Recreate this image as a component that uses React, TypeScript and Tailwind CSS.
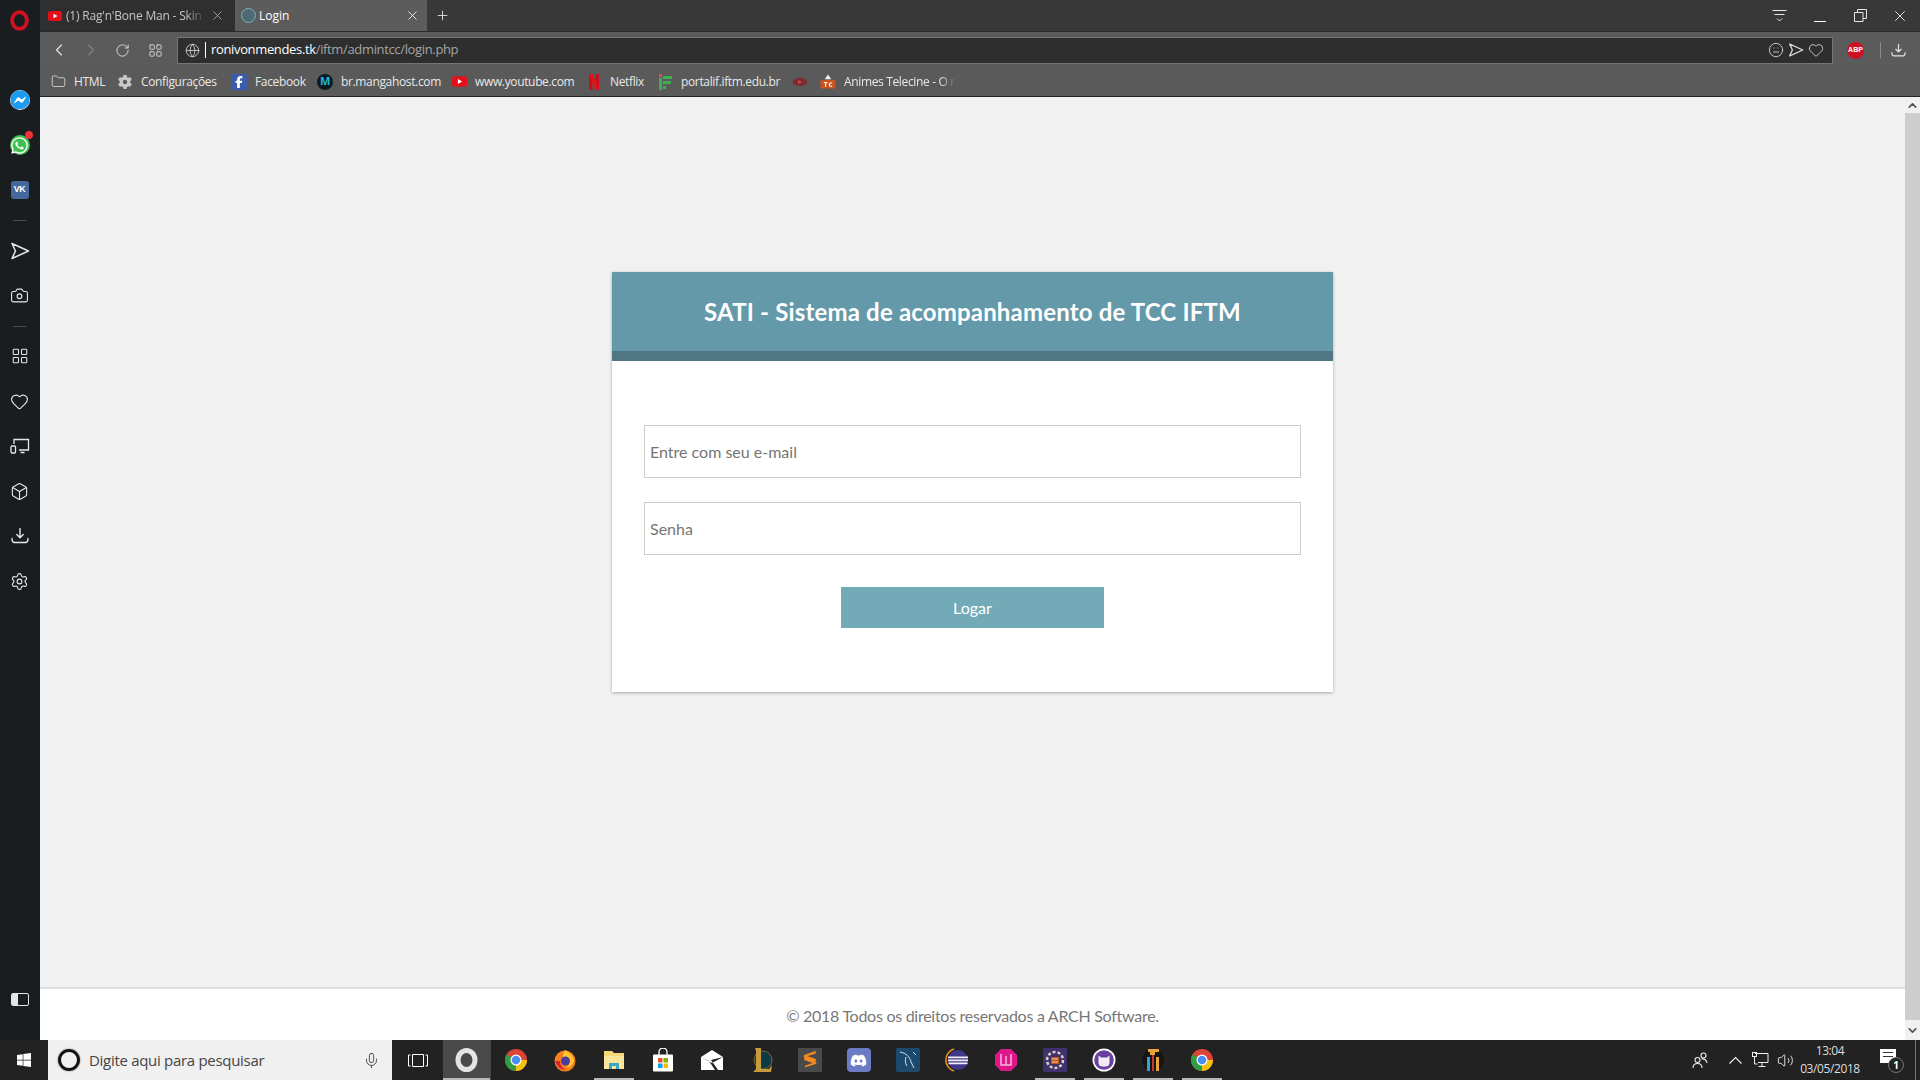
import React from "react";
import { Camera, LayoutGrid, Heart, Box, Settings, ChevronLeft, ChevronRight, RotateCw, Globe, Meh, X, Plus, Folder, ChevronUp, ChevronDown, Mic, Volume2 } from "lucide-react";
import { FaFacebookMessenger, FaWhatsapp, FaDiscord, FaFacebookF, FaWindows, FaGear } from "react-icons/fa6";

const Send = ({ s = 20, c = "#e6e6e6" }: { s?: number; c?: string }) => (
  <svg width={s} height={s} viewBox="0 0 20 20" fill="none" stroke={c} strokeWidth="1.5" strokeLinejoin="round"><path d="M2 2.500 18.500 10 2 17.500 5.500 10Z" /></svg>
);
const Tray = ({ s = 18, c = "#e6e6e6" }: { s?: number; c?: string }) => (
  <svg width={s} height={s} viewBox="0 0 18 18" fill="none" stroke={c} strokeWidth="1.4" strokeLinecap="round" strokeLinejoin="round"><path d="M9 1.500v9M5.800 7.500 9 10.700l3.200-3.200M1 11.500c0 2.500 1 4 2.500 4h11c1.500 0 2.500-1.500 2.500-4" /></svg>
);
const Devices = () => (
  <svg width="20" height="20" viewBox="0 0 20 20" fill="none" stroke="#e6e6e6" strokeWidth="1.300"><path d="M4 8V3.500h14.500v10.500H9M10.500 16.500h4" /><rect x="1" y="10" width="4.500" height="7" rx="1" /></svg>
);
const Opera = ({ s = 20 }: { s?: number }) => (
  <svg width={s} height={s} viewBox="0 0 20 20"><ellipse cx="10" cy="10" rx="7" ry="8" fill="none" stroke="#d3101f" strokeWidth="3.600" /></svg>
);
const Yt = ({ s = 14 }: { s?: number }) => (
  <svg width={s} height={s} viewBox="0 0 14 14" className="shrink-0"><rect x="0" y="2" width="14" height="10" rx="2.500" fill="#e5101a" /><path d="M5.500 4.700 9.500 7l-4 2.300Z" fill="#fff" /></svg>
);
const Chrome = () => (
  <svg width="24" height="24" viewBox="0 0 24 24">
    <circle cx="12" cy="12" r="11" fill="#dc4437" />
    <path d="M12 12 2.500 6.500A11 11 0 0 0 12 23Z" fill="#2f9e44" />
    <path d="M12 12h11A11 11 0 0 1 12 23Z" fill="#f4c20d" />
    <circle cx="12" cy="12" r="5.500" fill="#fff" /><circle cx="12" cy="12" r="4.300" fill="#4a8df0" />
  </svg>
);
const Firefox = () => (
  <svg width="24" height="24" viewBox="0 0 24 24"><circle cx="12" cy="13" r="10.500" fill="#f3801c" /><path d="M12 2c4 2 8 5 9 11-2 5-5 7-8 7 3-2 4-5 2-8-1-2-5-1-5-4 0-2 1-4 2-6Z" fill="#fdc52e" /><circle cx="12.500" cy="13" r="4.500" fill="#4a3b9c" /><path d="M2 13c2 6 6 9 11 9-4-2-6-5-6-9Z" fill="#d8262c" /></svg>
);
const Files = () => (
  <svg width="24" height="24" viewBox="0 0 24 24"><path d="M2 3h8l2 2h10v16H2Z" fill="#f7d675" /><path d="M2 8h20v13H2Z" fill="#fbe59b" /><path d="M7 21v-6h10v6h-3v-3h-4v3Z" fill="#3ba7c9" /></svg>
);
const Store = () => (
  <svg width="24" height="24" viewBox="0 0 24 24"><path d="M8 7V4a4 4 0 0 1 8 0v3" fill="none" stroke="#fff" strokeWidth="1.300" /><rect x="2" y="6.500" width="20" height="17" rx="1" fill="#fff" /><rect x="7" y="10" width="4.500" height="4.500" fill="#e8522a" /><rect x="12.500" y="10" width="4.500" height="4.500" fill="#7cb700" /><rect x="7" y="15.500" width="4.500" height="4.500" fill="#00a3ee" /><rect x="12.500" y="15.500" width="4.500" height="4.500" fill="#fcb900" /></svg>
);
const Mail = () => (
  <svg width="24" height="24" viewBox="0 0 24 24"><path d="M1 9 12 2l11 7v13H1Z" fill="#fff" /><path d="M1 9l11 6 11-6-12 3 7 10h-3l-6-9Z" fill="#222" /></svg>
);
const Lol = () => (
  <svg width="24" height="28" viewBox="0 0 24 28"><circle cx="14" cy="14" r="9" fill="#0d3a44" stroke="#7a6a35" /><path d="M6 2h6v21h8l3-4-1 7H4l3-3V5Z" fill="#c89b3c" /></svg>
);
const Sublime = () => (
  <svg width="24" height="24" viewBox="0 0 24 24"><rect width="24" height="24" fill="#4a4a4a" /><path d="M17 4 7 7.500v4l10 3.500-10 3.500v0l10-3v-4L7 8l10-3Z" fill="#f58a1f" stroke="#f58a1f" strokeWidth="1.500" /></svg>
);
const Mysql = () => (
  <svg width="24" height="24" viewBox="0 0 24 24"><rect width="24" height="24" rx="2" fill="#1d4a6c" /><path d="M4 4c6 1 10 5 11 10l3 6M10 9c-1 3-1 6 1 9M17 4l3 3" fill="none" stroke="#cfe2ee" strokeWidth="1" /></svg>
);
const Eclipse = () => (
  <svg width="24" height="24" viewBox="0 0 24 24"><circle cx="13" cy="12" r="10" fill="#3f3a8c" /><path d="M3 8.500h20v1.800H3ZM3 11.500h20v1.800H3ZM3.500 14.500h19v1.800h-19Z" fill="#f1eef7" /><path d="M9 1A11.500 11.500 0 0 0 9 23" fill="none" stroke="#f7941e" strokeWidth="1.500" /></svg>
);
const Wamp = () => (
  <svg width="24" height="24" viewBox="0 0 24 24"><path d="M7 1h10l6 6v10l-6 6H7l-6-6V7Z" fill="#e0168b" /><path d="M7 6v11h10V6M12 8v9" fill="none" stroke="#f7b6dc" strokeWidth="1.500" /></svg>
);
const Ide = () => (
  <svg width="24" height="24" viewBox="0 0 24 24"><rect width="24" height="24" rx="1" fill="#40306e" /><circle cx="12" cy="12" r="8" fill="none" stroke="#d8d2c0" strokeWidth="2.500" strokeDasharray="3 2" /><path d="M8 9h8v7H8Z" fill="#c2551f" /><path d="M9 11h6M9 14h6" stroke="#f3d9a8" strokeWidth="1" /></svg>
);
const CatApp = () => (
  <svg width="24" height="24" viewBox="0 0 24 24"><circle cx="12" cy="12" r="11.500" fill="#fff" /><circle cx="12" cy="12" r="9.800" fill="#6b3fa0" /><path d="M6.500 7.500 9 9.500h6l2.500-2v7.500a4 4 0 0 1-4 3.500h-3a4 4 0 0 1-4-3.500Z" fill="#f1eef7" /></svg>
);
const Titan = () => (
  <svg width="24" height="28" viewBox="0 0 24 28"><circle cx="12" cy="14" r="11" fill="#151515" /><path d="M7 3h11v3h-4v3H9V6H7Z" fill="#e8a33b" /><path d="M6 11h3v14H6Z" fill="#3aa0d8" /><path d="M15 11h3v14h-3Z" fill="#e8a33b" /><path d="M11 9h2v16h-2Z" fill="#c43c2b" /></svg>
);

const rail = "flex items-center justify-center";
const Sep = () => <div className="w-[13px] h-px bg-[#4a4d4f]" />;

function Sidebar() {
  return (
    <aside className="w-[40px] bg-[#1a1d1f] flex flex-col items-center pr-[1px] shrink-0 text-[#e6e6e6]">
      <div className={`${rail} h-[40px]`}><Opera s={21} /></div>
      <div className={`${rail} h-[36px] mt-[42px]`}>
        <div className="w-[20px] h-[20px] rounded-full bg-white flex items-center justify-center overflow-hidden"><FaFacebookMessenger size={20} color="#1d9bf0" /></div>
      </div>
      <div className={`${rail} h-[36px] mt-[9px] relative`}>
        <div className="w-[20px] h-[20px] rounded-full bg-[#3fbf50] flex items-center justify-center"><FaWhatsapp size={19} color="#fff" /></div>
        <div className="absolute top-[4px] right-[-3px] w-[8px] h-[8px] rounded-full bg-[#f0303a]" />
      </div>
      <div className={`${rail} h-[36px] mt-[9px]`}>
        <div className="w-[18px] h-[18px] rounded-[3px] bg-[#46689a] flex items-center justify-center text-white text-[9px] font-bold font-['Liberation_Sans',sans-serif] tracking-[-0.5px]">VK</div>
      </div>
      <div className="mt-[12px]"><Sep /></div>
      <div className={`${rail} h-[30px] mt-[15px]`}><Send /></div>
      <div className={`${rail} h-[30px] mt-[14px]`}><Camera size={19} strokeWidth={1.4} /></div>
      <div className="mt-[16px]"><Sep /></div>
      <div className={`${rail} h-[30px] mt-[14px]`}><LayoutGrid size={18} strokeWidth={1.400} /></div>
      <div className={`${rail} h-[30px] mt-[15px]`}><Heart size={19} strokeWidth={1.400} /></div>
      <div className={`${rail} h-[30px] mt-[15px]`}><Devices /></div>
      <div className={`${rail} h-[30px] mt-[15px]`}><Box size={19} strokeWidth={1.400} /></div>
      <div className={`${rail} h-[30px] mt-[15px]`}><Tray /></div>
      <div className={`${rail} h-[30px] mt-[15px]`}><Settings size={19} strokeWidth={1.400} /></div>
      <div className="mt-auto mb-[34px] w-[18px] h-[13px] rounded-[2px] border border-[#e6e6e6] flex overflow-hidden">
        <div className="w-[6px] bg-[#e6e6e6]" />
      </div>
    </aside>
  );
}

function Tabs() {
  return (
    <div className="h-[31px] bg-[#383838] flex items-stretch text-[12px] text-[#dcdcdc] font-['Open_Sans',sans-serif]">
      <div className="w-[195px] bg-[#2f2f2f] flex items-center pl-[8px] pr-[10px] shrink-0">
        <Yt />
        <span className="ml-[4px] w-[140px] overflow-hidden whitespace-nowrap text-[#c4c4c4] tracking-[-0.2px] [mask-image:linear-gradient(90deg,#000_85%,transparent)]">(1) Rag'n'Bone Man - Skin</span>
        <X size={15} strokeWidth={1.300} className="ml-auto text-[#b0b0b0]" />
      </div>
      <div className="w-[192px] bg-[#5c5c5c] flex items-center pl-[6px] pr-[7px] shrink-0">
        <div className="w-[15px] h-[15px] rounded-full border border-[#7fb1bd] bg-[#4e6a72] shrink-0" />
        <span className="ml-[3px] text-white">Login</span>
        <X size={15} strokeWidth={1.300} className="ml-auto text-white" />
      </div>
      <div className="flex items-center pl-[8px]"><Plus size={15} strokeWidth={1.400} className="text-[#e6e6e6]" /></div>
      <div className="ml-auto flex items-center text-white pr-[11px]">
        <svg width="18" height="14" viewBox="0 0 18 14" fill="none" stroke="#e6e6e6" strokeWidth="1"><path d="M1.500 1.500h14M3.500 5.500h10M6 9.500l2.500 2.500L11 9.500" /></svg>
        <div className="w-[12px] h-px bg-white ml-[25px] mt-[12px]" />
        <svg className="ml-[28px]" width="13" height="13" viewBox="0 0 13 13" fill="none" stroke="#e6e6e6" strokeWidth="1"><path d="M.5 3.500h8.500v9H.5ZM3.500 3.500V.5h9v9H9" /></svg>
        <X size={18} strokeWidth={1.100} className="ml-[24px]" />
      </div>
    </div>
  );
}

function Toolbar() {
  return (
    <div className="h-[36px] bg-[#5b5b5b] border-t border-[#2a2a2a] flex items-center pt-[1px] text-[#e6e6e6]">
      <div className="w-[29px] flex justify-end"><ChevronLeft size={20} strokeWidth={1.400} /></div>
      <div className="w-[32px] flex justify-end text-[#808080]"><ChevronRight size={20} strokeWidth={1.400} /></div>
      <div className="w-[29px] flex justify-end"><RotateCw size={15} strokeWidth={1.400} /></div>
      <div className="w-[33px] flex justify-end"><LayoutGrid size={15} strokeWidth={1.300} /></div>
      <div className="ml-[14px] w-[1656px] h-[27px] bg-[#2e2e2e] border border-[#757575] flex items-center pl-[7px] font-['Open_Sans',sans-serif] text-[13px]">
        <Globe size={15} strokeWidth={1.200} />
        <div className="w-px h-[16px] bg-white ml-[5px]" />
        <span className="ml-[5px] text-white tracking-[-0.35px]">ronivonmendes.tk<span className="text-[#a5a5a5]">/iftm/admintcc/login.php</span></span>
        <div className="ml-auto flex items-center pr-[8px] gap-[4px]">
          <Meh size={16} strokeWidth={1.200} />
          <Send s={16} />
          <Heart size={16} strokeWidth={1.200} />
        </div>
      </div>
      <div className="ml-[14px] w-[17px] h-[17px] rounded-full bg-[#cf1020] text-white font-['Liberation_Sans',sans-serif] text-[7px] font-bold flex items-center justify-center">ABP</div>
      <div className="ml-[16px] w-px h-[16px] bg-[#8a8a8a]" />
      <div className="ml-[10px]"><Tray s={15} /></div>
    </div>
  );
}

const Mark = ({ children, className }: { children?: React.ReactNode; className: string }) => (
  <div className={`w-[16px] h-[16px] flex items-center justify-center shrink-0 ${className}`}>{children}</div>
);

function Bookmarks() {
  const text = "text-[#e8e8e8] whitespace-nowrap ml-[8px]";
  return (
    <div className="h-[30px] bg-[#5a5a5a] border-b border-[#222] flex items-center text-[12px] font-['Open_Sans',sans-serif] tracking-[-0.35px] pl-[10px]">
      <div className="w-[67px] flex items-center pl-[1px] shrink-0"><Folder size={15} strokeWidth={1.200} className="text-[#e8e8e8]" /><span className="text-[#e8e8e8] ml-[8px]">HTML</span></div>
      <div className="w-[114px] flex items-center shrink-0"><Mark className=""><FaGear size={14} color="#c8c8c8" /></Mark><span className={text}>Configurações</span></div>
      <div className="w-[86px] flex items-center shrink-0"><Mark className="bg-[#3b5cab]"><FaFacebookF size={12} color="#fff" /></Mark><span className={text}>Facebook</span></div>
      <div className="w-[134px] flex items-center shrink-0"><Mark className="bg-[#0c1a22] rounded-full text-[#28b5d8] text-[11px] font-bold">M</Mark><span className={text}>br.mangahost.com</span></div>
      <div className="w-[135px] flex items-center shrink-0"><Mark className=""><Yt s={15} /></Mark><span className={text}>www.youtube.com</span></div>
      <div className="w-[71px] flex items-center shrink-0"><Mark className=""><svg width="10" height="16" viewBox="0 0 10 16"><path d="M0 0h3.500v16L0 15.500ZM6.500 0H10v15.500L6.500 16Z" fill="#c8101a" /><path d="M0 0h3.500L10 15.500 6.500 16Z" fill="#e5101a" /></svg></Mark><span className={text}>Netflix</span></div>
      <div className="w-[135px] flex items-center shrink-0"><Mark className=""><svg width="14" height="16" viewBox="0 0 14 16"><path d="M1 0h3v3H1Z" fill="#d9534f" /><path d="M1 4h3v12H1ZM5 2h9v3H5ZM5 7h8v3H5ZM5 12h3v3H5Z" fill="#3fae52" /></svg></Mark><span className={text}>portalif.iftm.edu.br</span></div>
      <div className="w-[28px] flex items-center shrink-0"><svg width="16" height="10" viewBox="0 0 16 10"><ellipse cx="8" cy="5" rx="7.500" ry="4" fill="#7a2c30" /><path d="M6 3l4 2-4 2Z" fill="#d04848" /></svg></div>
      <div className="flex items-center"><Mark className=""><svg width="17" height="16" viewBox="0 0 17 16"><path d="M8.500 0 12 5H5Z" fill="#eee" /><rect x="0.500" y="6" width="16" height="9" rx="1" fill="#c9531c" /><path d="M4 8.500h4M6 8.500V13M13 9H11c-1.500 0-1.500 3.500 0 3.500h2" fill="none" stroke="#fff" strokeWidth="1.100" /></svg></Mark><span className={`${text} w-[112px] overflow-hidden [mask-image:linear-gradient(90deg,#000_85%,transparent)]`}>Animes Telecine - O r</span></div>
    </div>
  );
}

function Scrollbar() {
  return (
    <div className="w-[15px] shrink-0 bg-[#f1f1f1] flex flex-col">
      <div className="h-[16px] flex items-center justify-center"><ChevronUp size={13} strokeWidth={3} className="text-[#505050]" /></div>
      <div className="h-[907px] bg-[#cdcdcd]" />
      <div className="mt-auto h-[20px] flex items-center justify-center"><ChevronDown size={13} strokeWidth={3} className="text-[#505050]" /></div>
    </div>
  );
}

function Page() {
  const field = "w-full h-[53px] bg-white border border-[#cccccc] px-[5px] text-[16px] outline-none placeholder:text-[#757575]";
  return (
    <div className="flex-1 min-h-0 flex">
      <div className="flex-1 flex flex-col min-w-0 font-['Lato',sans-serif]">
        <main className="flex-1 bg-[#f1f1f1] flex justify-center pt-[175px]">
          <div className="w-[721px] h-[420px] bg-white shadow-[0_1px_3px_rgba(0,0,0,0.3)]">
            <div className="h-[89px] bg-[#6499aa] border-b-[10px] border-[#4e7683] flex items-center justify-center">
              <h1 className="text-white text-[24px] font-bold tracking-[0.17px]">SATI - Sistema de acompanhamento de TCC IFTM</h1>
            </div>
            <form className="px-[32px] pt-[64px]">
              <input className={field} placeholder="Entre com seu e-mail" />
              <input className={`${field} mt-[24px]`} placeholder="Senha" />
              <div className="flex justify-center mt-[32px]">
                <button type="button" className="w-[263px] h-[41px] bg-[#72abb7] text-white text-[16px]">Logar</button>
              </div>
            </form>
          </div>
        </main>
        <footer className="h-[53px] bg-white border-t-2 border-[#e0e0e0] flex items-center justify-center pt-[2px] text-[16px] text-[#777777] tracking-[-0.27px]">
          © 2018 Todos os direitos reservados a ARCH Software.
        </footer>
      </div>
      <Scrollbar />
    </div>
  );
}

function Task({ children, on }: { children: React.ReactNode; on?: boolean }) {
  return (
    <div className="w-[49px] h-[40px] flex items-center justify-center relative shrink-0">
      {children}
      {on && <div className="absolute bottom-0 left-[5px] w-[40px] h-[2px] bg-[#b8b8b8]" />}
    </div>
  );
}

function Taskbar() {
  return (
    <div className="h-[40px] bg-[#222222] flex items-stretch text-white shrink-0">
      <div className="w-[48px] flex items-center justify-center"><FaWindows size={16} /></div>
      <div className="w-[344px] bg-[#f0f0f0] flex items-center pl-[10px] pr-[12px] text-[#444] text-[15px] tracking-[-0.3px] font-['Open_Sans',sans-serif]">
        <div className="w-[22px] h-[22px] rounded-full border-[3px] border-[#111] shadow-[0_0_2px_#777]" />
        <span className="ml-[9px]">Digite aqui para pesquisar</span>
        <Mic size={17} strokeWidth={1.200} className="ml-auto text-[#333]" />
      </div>
      <div className="w-[51px] flex items-center justify-center">
        <svg width="20" height="13" viewBox="0 0 20 13" fill="none" stroke="#fff" strokeWidth="1"><path d="M4.500.5h11v12h-11ZM2.500 1H.5v11h2M17.500 1h2v11h-2" /></svg>
      </div>
      <div className="w-[47px] bg-[#4a4a4a] flex items-center justify-center relative">
        <svg width="23" height="24" viewBox="0 0 23 24"><ellipse cx="11.500" cy="12" rx="8.500" ry="9.500" fill="none" stroke="#e4e4e4" strokeWidth="5" /></svg>
        <div className="absolute bottom-0 left-0 w-full h-[2px] bg-[#b8b8b8]" />
      </div>
      <div className="w-px bg-[#444]" />
      <Task><Chrome /></Task>
      <Task><Firefox /></Task>
      <Task on><Files /></Task>
      <Task><Store /></Task>
      <Task><Mail /></Task>
      <Task><Lol /></Task>
      <Task><Sublime /></Task>
      <Task><div className="w-[24px] h-[24px] rounded-[4px] bg-[#6b7cc4] flex items-center justify-center"><FaDiscord size={17} color="#fff" /></div></Task>
      <Task><Mysql /></Task>
      <Task><Eclipse /></Task>
      <Task><Wamp /></Task>
      <Task on><Ide /></Task>
      <Task on><CatApp /></Task>
      <Task on><Titan /></Task>
      <Task on><Chrome /></Task>
      <div className="ml-auto flex items-center">
        <svg width="17" height="17" viewBox="0 0 17 17" fill="none" stroke="#eee" strokeWidth="1.100"><circle cx="5.500" cy="8" r="2.500" /><path d="M1 16c0-3 2-4.500 4.500-4.500S10 13 10 16" /><circle cx="11.500" cy="3.500" r="2.500" /><path d="M9.500 7c2.500-.5 5.500 1 5.500 4" /></svg>
        <svg className="ml-[20px]" width="13" height="8" viewBox="0 0 13 8" fill="none" stroke="#eee" strokeWidth="1.200"><path d="M.5 7.500 6.500 1.500l6 6" /></svg>
        <svg className="ml-[10px]" width="17" height="16" viewBox="0 0 17 16" fill="none" stroke="#eee" strokeWidth="1"><path d="M3 1.500h13v9H6M10 10.500v4M6.500 14.500h7" /><rect x=".5" y=".5" width="4" height="4" /><path d="M2.500 4.500V12h3" /></svg>
        <Volume2 size={17} strokeWidth={1.200} className="ml-[8px] text-[#fff]" />
        <div className="ml-[6px] w-[60px] flex flex-col items-center text-[12px] leading-[18px] text-[#ddd] font-['Open_Sans',sans-serif] tracking-[-0.4px]">
          <span>13:04</span>
          <span>03/05/2018</span>
        </div>
        <div className="ml-[20px] w-[16px] h-[14px] bg-white relative mb-[8px]">
          <div className="absolute top-[3px] left-[3px] w-[10px] h-[5px] border-y border-[#333]" />
          <div className="absolute top-[8px] left-[8px] w-[16px] h-[16px] rounded-full border border-[#777] bg-[#222] text-[10px] leading-[14px] text-center font-bold">1</div>
        </div>
        <div className="ml-[19px] w-px h-[40px] bg-[#777] mr-[4px]" />
      </div>
    </div>
  );
}

export default function App() {
  return (
    <div className="w-[1920px] h-[1080px] flex flex-col overflow-hidden">
      <div className="flex flex-1 min-h-0">
        <Sidebar />
        <div className="flex-1 min-w-0 flex flex-col">
          <Tabs />
          <Toolbar />
          <Bookmarks />
          <Page />
        </div>
      </div>
      <Taskbar />
    </div>
  );
}
